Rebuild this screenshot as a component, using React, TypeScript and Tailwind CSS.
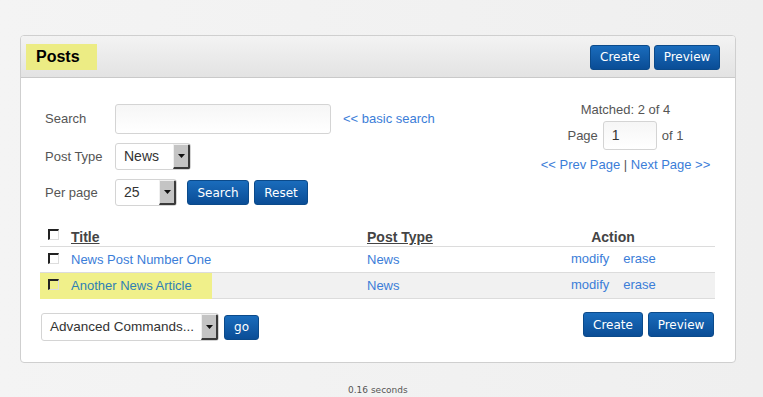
import React from "react";

const btn =
  "h-[25px] px-[10px] rounded-[3px] border border-[#0b4a8a] bg-gradient-to-b from-[#1a6cbc] to-[#0a4d96] text-white text-[12px] font-['DejaVu_Sans',sans-serif] leading-none flex items-center justify-center";

function Arrow({ h }: { h: number }) {
  return (
    <div
      className="w-[17px] self-stretch bg-[#c4c4c4] border-l border-t border-l-[#f0f0f0] border-t-[#f0f0f0] border-r-2 border-b-2 border-r-[#3a3a3a] border-b-[#3a3a3a] flex items-center justify-center"
      style={{ height: h }}
    >
      <svg width="7" height="4" viewBox="0 0 7 4">
        <path d="M0 0 H7 L3.5 4 Z" fill="#111" />
      </svg>
    </div>
  );
}

function Check() {
  return (
    <div className="w-[11px] h-[11px] border-t-2 border-l-2 border-t-[#222] border-l-[#222] border-r border-b border-r-[#ddd] border-b-[#ddd] bg-transparent" />
  );
}

export default function App() {
  return (
    <div className="w-[763px] h-[397px] bg-gradient-to-r from-[#f4f4f4] to-[#efefef] font-['Liberation_Sans',Arial,sans-serif] pt-[35px] pl-[20px] relative">
      <div className="w-[716px] h-[328px] bg-white border border-[#cfcfcf] rounded-[4px] overflow-hidden flex flex-col">
        {/* header */}
        <div className="h-[42px] bg-gradient-to-b from-[#f3f3f3] to-[#e3e3e3] border-b border-[#c9c9c9] flex items-center justify-between pl-[5px] pr-[15px] shrink-0">
          <div className="h-[26px] w-[71px] bg-[#ecec84] flex items-center pl-[10px] text-[16px] font-bold text-black">
            Posts
          </div>
          <div className="flex gap-[4px] pt-[1px]">
            <button className={`${btn} w-[60px]`}>Create</button>
            <button className={`${btn} w-[66px]`}>Preview</button>
          </div>
        </div>

        {/* body */}
        <div className="px-[20px] pt-[26px]">
          <div className="flex justify-between">
            <div className="flex flex-col text-[13px] text-[#555]">
              <div className="flex items-center h-[30px]">
                <span className="w-[74px] pl-[4px]">Search</span>
                <div className="w-[216px] h-[30px] border border-[#d4d4d4] rounded-[3px] bg-gradient-to-b from-[#f6f6f6] to-white" />
                <span className="ml-[12px] text-[#3b7dd8]">&lt;&lt; basic search</span>
              </div>
              <div className="flex items-center h-[27px] mt-[9px]">
                <span className="w-[74px] pl-[4px]">Post Type</span>
                <div className="w-[76px] h-[27px] border border-[#d4d4d4] rounded-[3px] bg-white flex items-center justify-between overflow-hidden">
                  <span className="pl-[8px] text-[14px] text-[#333]">News</span>
                  <Arrow h={25} />
                </div>
              </div>
              <div className="flex items-center h-[27px] mt-[9px]">
                <span className="w-[74px] pl-[4px]">Per page</span>
                <div className="w-[62px] h-[27px] border border-[#d4d4d4] rounded-[3px] bg-white flex items-center justify-between overflow-hidden">
                  <span className="pl-[8px] text-[14px] text-[#333]">25</span>
                  <Arrow h={25} />
                </div>
                <button className={`${btn} w-[62px] ml-[10px]`}>Search</button>
                <button className={`${btn} w-[54px] ml-[5px]`}>Reset</button>
              </div>
            </div>

            <div className="w-[171px] mr-[4px] flex flex-col items-center text-[13px] text-[#555] -mt-[2px]">
              <div className="h-[16px] leading-[16px]">Matched: 2 of 4</div>
              <div className="flex items-center mt-[3px]">
                <span>Page</span>
                <div className="w-[54px] h-[29px] mx-[5px] border border-[#d4d4d4] rounded-[3px] bg-gradient-to-b from-[#f6f6f6] to-white flex items-center pl-[8px] text-[14px] text-[#333]">
                  1
                </div>
                <span>of 1</span>
              </div>
              <div className="mt-[5px] text-[#3b7dd8] whitespace-nowrap">
                &lt;&lt; Prev Page <span className="text-[#555]">|</span> Next Page &gt;&gt;
              </div>
            </div>
          </div>

          {/* table */}
          <div className="mt-[20px] -ml-[1px] text-[13px]">
            <div className="grid grid-cols-[31px_296px_144px_1fr] h-[21px] items-start border-b border-[#dcdcdc]">
              <div className="pl-[8px] pt-[3px]"><Check /></div>
              <div className="font-bold text-[14px] text-[#444] underline leading-[16px] pt-[3px]">Title</div>
              <div className="font-bold text-[14px] text-[#444] underline leading-[16px] pt-[3px]">Post Type</div>
              <div className="font-bold text-[14px] text-[#444] text-center leading-[16px] pt-[3px]">Action</div>
            </div>
            <div className="grid grid-cols-[31px_296px_144px_1fr] h-[26px] items-center border-b border-[#dcdcdc]">
              <div className="pl-[8px] -mt-[3px]"><Check /></div>
              <div className="text-[#3b7dd8]">News Post Number One</div>
              <div className="text-[#3b7dd8]">News</div>
              <div className="text-[#3b7dd8] pl-[60px] -mt-[2px]">modify<span className="ml-[14px]">erase</span></div>
            </div>
            <div className="grid grid-cols-[31px_296px_144px_1fr] h-[26px] items-center border-b border-[#dcdcdc] bg-[#f1f1f1]">
              <div className="col-span-2 h-[26px] w-[172px] bg-[#f0f08a] flex items-center">
                <div className="pl-[8px] -mt-[3px] w-[31px]"><Check /></div>
                <div className="text-[#2f7fb5]">Another News Article</div>
              </div>
              <div className="text-[#3b7dd8]">News</div>
              <div className="text-[#3b7dd8] pl-[60px] -mt-[2px]">modify<span className="ml-[14px]">erase</span></div>
            </div>
          </div>

          {/* bottom */}
          <div className="flex justify-between items-start mt-[13px]">
            <div className="flex items-center mt-[1px]">
              <div className="w-[178px] h-[28px] border border-[#d4d4d4] rounded-[3px] bg-white flex items-center justify-between overflow-hidden">
                <span className="pl-[8px] text-[13.5px] text-[#333] whitespace-nowrap">Advanced Commands...</span>
                <Arrow h={26} />
              </div>
              <button className={`${btn} w-[35px] ml-[5px]`}>go</button>
            </div>
            <div className="flex gap-[5px] pr-[1px]">
              <button className={`${btn} w-[60px]`}>Create</button>
              <button className={`${btn} w-[66px]`}>Preview</button>
            </div>
          </div>
        </div>
      </div>
      <div className="absolute left-[348px] top-[384px] text-[9px] text-[#555] font-['DejaVu_Sans',sans-serif]">
        0.16 seconds
      </div>
    </div>
  );
}
